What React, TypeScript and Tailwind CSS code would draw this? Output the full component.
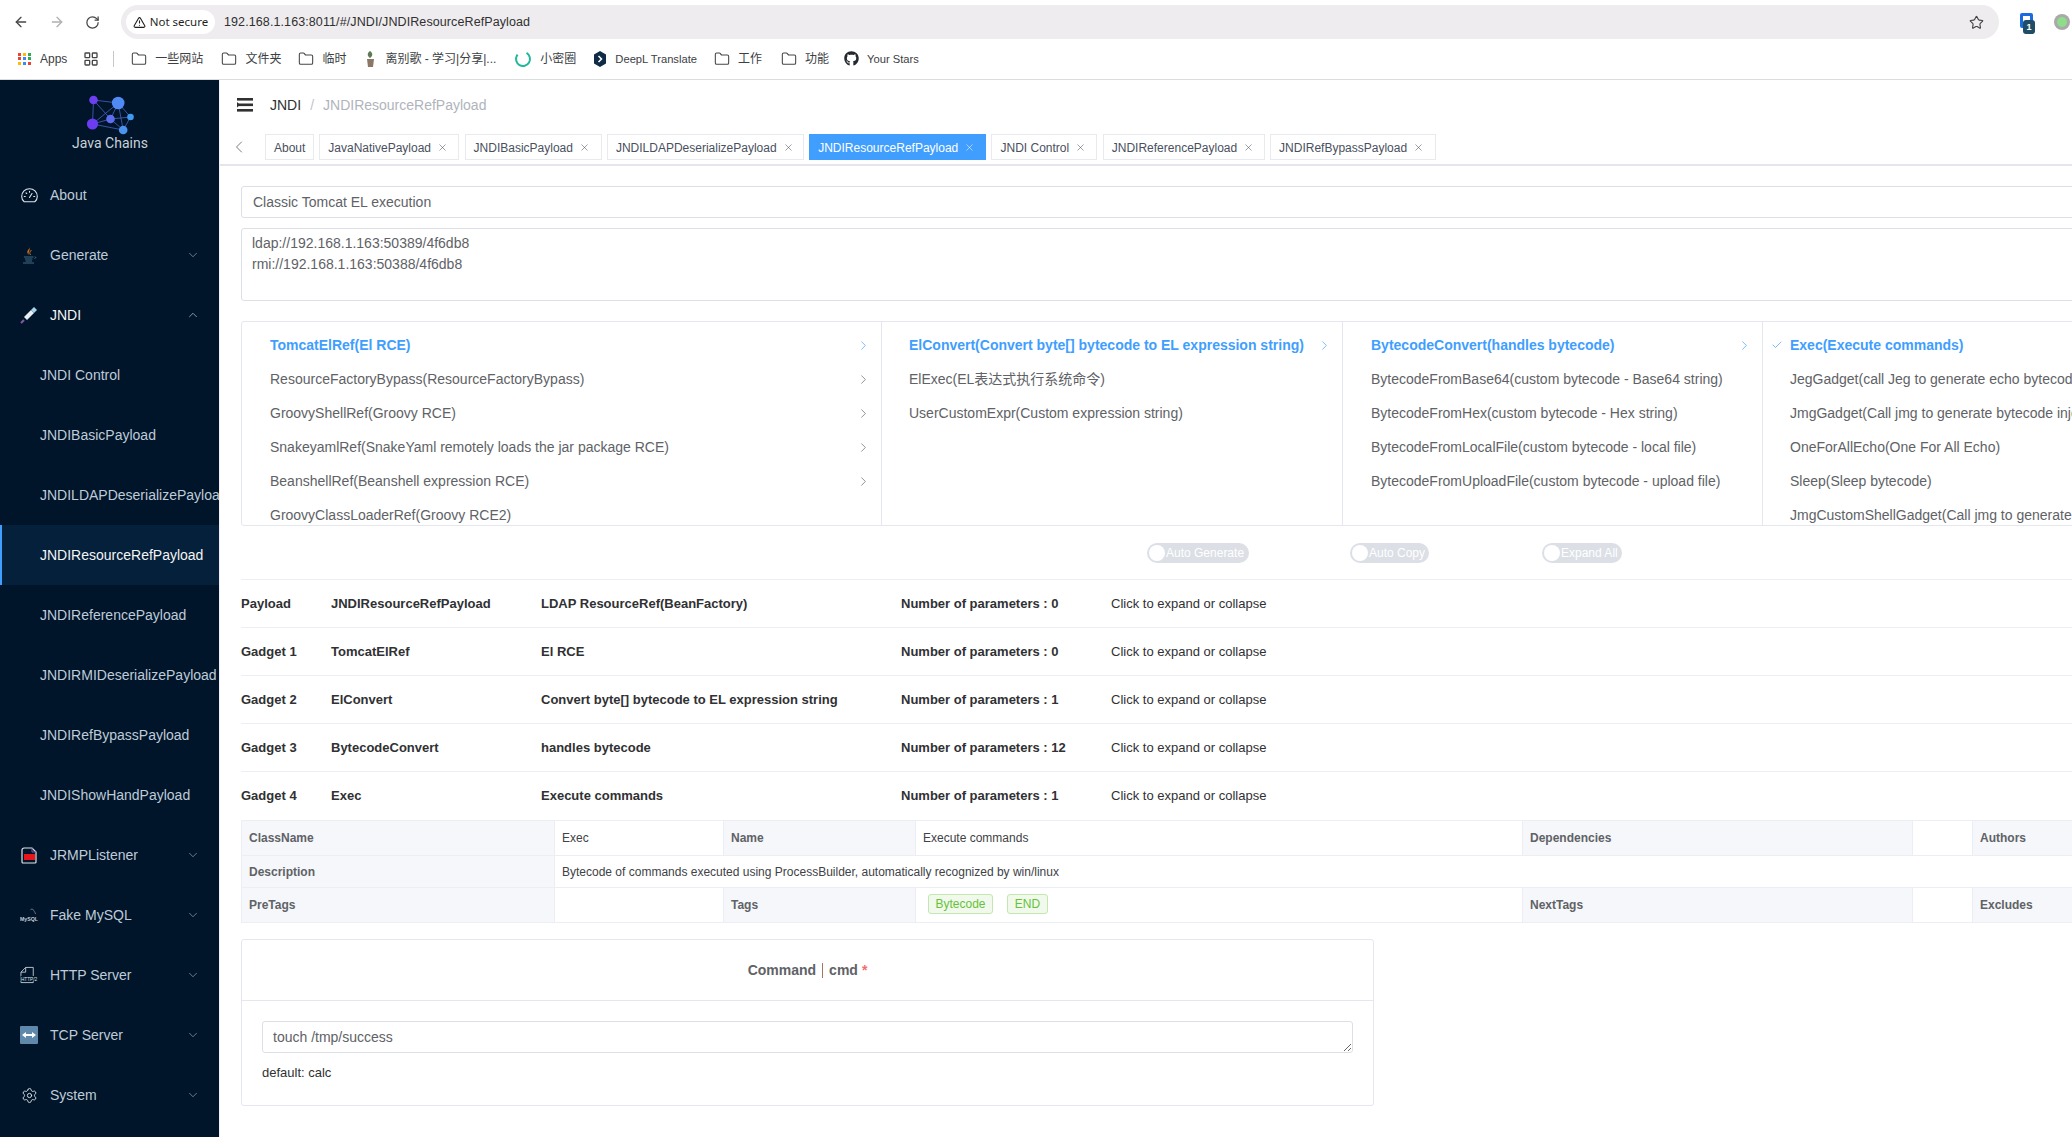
import React from "react";
import { ArrowLeft, ArrowRight, RotateCw, TriangleAlert, Star, Folder, LayoutGrid, Settings, ChevronDown, ChevronUp, ChevronLeft, ChevronRight, X, Check } from "lucide-react";
import { FaGithub } from "react-icons/fa";

const CJK = '"Liberation Sans","Noto Sans CJK SC",sans-serif';

function AppsIcon() {
  const c = ["#ea4335", "#fbbc04", "#34a853", "#ea4335", "#4285f4", "#34a853", "#fbbc04", "#4285f4", "#ea4335"];
  return (
    <div className="grid grid-cols-3 gap-[1.5px] w-[13px] h-[13px]">
      {c.map((x, i) => (
        <div key={i} style={{ background: x }} className="w-[3px] h-[3px]" />
      ))}
    </div>
  );
}

function Bookmark({ icon, text, ml, small }: { icon: React.ReactNode; text: string; ml: string; small?: boolean }) {
  return (
    <div className={`flex items-center gap-[8px] ${ml}`}>
      {icon}
      <span className={`${small ? "text-[11.2px]" : "text-[12px]"} text-[#3c4043] whitespace-nowrap`}>{text}</span>
    </div>
  );
}

const folder = <Folder size={16} strokeWidth={1.6} className="text-[#444746]" />;

function BrowserChrome() {
  return (
    <div className="shrink-0 h-[80px] border-b border-[#dadce0] bg-white font-['Liberation_Sans','Noto_Sans_CJK_SC',sans-serif]">
      <div className="h-[44px] flex items-center relative">
        <div className="flex items-center pl-[13px] gap-[20px] text-[#474747] w-[121px]">
          <ArrowLeft size={16} strokeWidth={2} />
          <ArrowRight size={16} strokeWidth={2} className="text-[#b0b0b0]" />
          <RotateCw size={15} strokeWidth={2} />
        </div>
        <div className="w-[1878px] h-[34px] bg-[#eeecee] rounded-full flex items-center pl-[5px] pr-[15px]">
          <div className="h-[24px] w-[89px] bg-white rounded-full flex items-center justify-center gap-[4px]">
            <TriangleAlert size={13} strokeWidth={2} className="text-[#1f1f1f]" />
            <span className="text-[11.5px] text-[#1f1f1f] whitespace-nowrap font-['Noto_Sans',sans-serif]">Not secure</span>
          </div>
          <span className="ml-[9px] text-[12.5px] text-[#303030] tracking-[0.1px]">192.168.1.163:8011/#/JNDI/JNDIResourceRefPayload</span>
          <Star size={15} strokeWidth={1.8} className="ml-auto text-[#444]" />
        </div>
        <div className="ml-[21px] relative w-[16px] h-[20px]">
          <div className="absolute left-0 top-[1px] w-[13px] h-[15px] rounded-[2px] border-[3px] border-[#1a6be0]" />
          <div className="absolute left-[3px] top-[8px] w-[12px] h-[14px] rounded-[3px] bg-[#1f4d68] text-white text-[9px] font-bold leading-[14px] text-center">1</div>
        </div>
        <div className="ml-[18px] w-[16px] h-[16px] rounded-full bg-[#a9a9a9] flex items-center justify-center shrink-0">
          <div className="w-[10px] h-[10px] rounded-full bg-[#8fdc8a]" />
        </div>
      </div>
      <div className="h-[30px] flex items-center">
        <div className="ml-[18px]"><AppsIcon /></div>
        <span className="ml-[9px] text-[12px] text-[#3c4043]">Apps</span>
        <LayoutGrid size={16} strokeWidth={2} className="ml-[16px] text-[#444746]" />
        <div className="ml-[14px] w-px h-[16px] bg-[#c7c7c7]" />
        <Bookmark ml="ml-[17px]" icon={folder} text="一些网站" />
        <Bookmark ml="ml-[18px]" icon={folder} text="文件夹" />
        <Bookmark ml="ml-[17px]" icon={folder} text="临时" />
        <Bookmark ml="ml-[18px]" icon={
          <svg width="13" height="18" viewBox="0 0 13 18"><path d="M6 1 C3 3 3 6 6 8 C9 6 9 3 6 1Z" fill="#5d7a55" /><path d="M3 9h7l-1 8H4z" fill="#8a7766" /></svg>
        } text="离别歌 - 学习|分享|..." />
        <Bookmark ml="ml-[18px]" icon={
          <svg width="18" height="18" viewBox="0 0 18 18"><circle cx="9" cy="9" r="7" fill="none" stroke="#23b89a" strokeWidth="2" strokeDasharray="34 10" transform="rotate(-60 9 9)" /></svg>
        } text="小密圈" />
        <Bookmark ml="ml-[17px]" small icon={
          <svg width="14" height="16" viewBox="0 0 14 16"><path d="M7 0l6 3.5v9L7 16l-6-3.5v-9z" fill="#0f2b46" /><path d="M5.5 5l3 3-3 3" stroke="#fff" strokeWidth="1.5" fill="none" /></svg>
        } text="DeepL Translate" />
        <Bookmark ml="ml-[17px]" icon={folder} text="工作" />
        <Bookmark ml="ml-[19px]" icon={folder} text="功能" />
        <Bookmark ml="ml-[15px]" small icon={<FaGithub size={15} className="text-[#24292f]" />} text="Your Stars" />
      </div>
    </div>
  );
}

function Logo() {
  const nodes: [number, number, number, string][] = [
    [16.5, 10, 4.3, "#6d3ff0"], [41.2, 13, 6.3, "#4f8af5"], [53.5, 27, 3.3, "#3f9af0"],
    [33.5, 29, 4.3, "#5d6cf0"], [15.5, 34, 5.6, "#6b3cf0"], [46.2, 40, 4.3, "#4a94f0"],
  ];
  const edges = [[0,1],[0,3],[0,4],[1,2],[1,3],[1,5],[2,3],[2,5],[3,4],[3,5],[4,5],[4,1]];
  return (
    <svg width="66" height="46" viewBox="0 0 66 46" className="mx-auto block">
      {edges.map(([a, b], i) => (
        <line key={i} x1={nodes[a][0]} y1={nodes[a][1]} x2={nodes[b][0]} y2={nodes[b][1]} stroke="#4a5fc4" strokeWidth="0.8" />
      ))}
      {nodes.map(([x, y, r, c], i) => <circle key={i} cx={x} cy={y} r={r} fill={c} />)}
    </svg>
  );
}

const icons: Record<string, React.ReactNode> = {
  About: (
    <svg width="17" height="15" viewBox="0 0 17 15" fill="none" stroke="#dfe5ec" strokeWidth="1.1" strokeLinecap="round">
      <path d="M3.2 13.800C1.600 12.500 .7 10.600 .7 8.500a7.800 7.800 0 0115.600 0c0 2.100-.9 4-2.500 5.300z" />
      <path d="M8.500 9.500L11 5.500M3.300 8.500h1M12.700 8.500h1M5 4.800l.7.7M8.500 3.200v1" />
    </svg>
  ),
  Generate: (
    <svg width="16" height="18" viewBox="0 0 16 18">
      <path d="M8.500 0c1 3-3 4-2 7 .3 1 1 1.500 1.500 2C6.500 7 9.500 5 8.500 0z" fill="#c9701f" />
      <path d="M10.500 4c-1.500 1.500-2.500 3-1 5" stroke="#c9701f" strokeWidth="1" fill="none" />
      <path d="M3 11h9.500M14 10.500l1 1-1.500 1M4 13h7.500M4.500 15h6.500M2 17h11" stroke="#3e6c86" strokeWidth="1" fill="none" />
    </svg>
  ),
  JNDI: (
    <svg width="18" height="18" viewBox="0 0 18 18">
      <path d="M1 17l3-3" stroke="#7a5aa0" strokeWidth="2.200" />
      <path d="M4 11l7-7 3 3-7 7z" fill="#e8eef5" />
      <path d="M11 4l3-3 3 3-3 3z" fill="#a7d4ea" />
    </svg>
  ),
  JRMPListener: (
    <svg width="16" height="17" viewBox="0 0 16 17">
      <path d="M1 3a2 2 0 012-2h8l4 4v10a1 1 0 01-1 1H2a1 1 0 01-1-1z" fill="none" stroke="#dfe5ec" strokeWidth="1.200" />
      <rect x="3" y="7" width="11" height="6" fill="#e8141c" />
      <path d="M11 1v4h4" fill="none" stroke="#7a5aa0" strokeWidth="1" />
    </svg>
  ),
  "Fake MySQL": (
    <svg width="19" height="16" viewBox="0 0 19 16">
      <text x="0" y="14" fontSize="5.500" fontWeight="700" fill="#c5ced8" fontFamily="Liberation Sans">MySQL</text>
      <path d="M11 2.500c1-1 2.500-1 3 0s1.500 2 2.500 4.500" stroke="#8695a5" strokeWidth="0.8" fill="none" />
    </svg>
  ),
  "HTTP Server": (
    <svg width="19" height="18" viewBox="0 0 19 18">
      <path d="M1 17V6l5-5h8v16z" fill="none" stroke="#cfd7e0" strokeWidth="0.900" />
      <path d="M1 6h5V1" fill="none" stroke="#cfd7e0" strokeWidth="0.900" />
      <rect x="0.500" y="10" width="18" height="5.500" fill="#001529" />
      <text x="1" y="15" fontSize="5" fill="#dfe5ec" fontFamily="Liberation Sans">HTTP/2</text>
    </svg>
  ),
  "TCP Server": (
    <svg width="18" height="18" viewBox="0 0 18 18">
      <rect width="18" height="18" rx="1" fill="#5f88aa" />
      <path d="M2 9l4-3v2h6V6l4 3-4 3v-2H6v2z" fill="#fff" />
    </svg>
  ),
  System: <Settings size={17} strokeWidth={1.3} className="text-[#dfe5ec]" />,
};

function TopItem({ label, open, chev = true, active }: { label: string; open?: boolean; chev?: boolean; active?: boolean }) {
  return (
    <div className={`h-[60px] flex items-center pl-[20px] pr-[19px] text-[14px] ${active ? "text-[#f4f4f5]" : "text-[#bfcbd9]"}`}>
      <div className="w-[18px] flex justify-center shrink-0">{icons[label]}</div>
      <span className="ml-[12px] whitespace-nowrap">{label}</span>
      {chev && (open
        ? <ChevronUp size={14} strokeWidth={1.3} className="ml-auto text-[#b4bcc8]" />
        : <ChevronDown size={14} strokeWidth={1.3} className="ml-auto text-[#8c99a8]" />)}
    </div>
  );
}

function SubItem({ label, active }: { label: string; active?: boolean }) {
  return (
    <div className={`h-[60px] flex items-center text-[14px] whitespace-nowrap overflow-hidden ${active ? "bg-[#04203a] text-[#f4f4f5] border-l-2 border-[#409eff] pl-[38px]" : "text-[#bfcbd9] pl-[40px]"}`}>
      {label}
    </div>
  );
}

function Sidebar() {
  return (
    <aside className="w-[219px] shrink-0 bg-[#001529] overflow-hidden">
      <div className="h-[85px] pt-[10px] pl-[1px] text-center">
        <Logo />
        <div className="text-[14px] leading-[18px] -mt-[2px] text-[#c9d1d9] font-['Roboto',sans-serif]">Java Chains</div>
      </div>
      <TopItem label="About" chev={false} />
      <TopItem label="Generate" />
      <TopItem label="JNDI" open active />
      <SubItem label="JNDI Control" />
      <SubItem label="JNDIBasicPayload" />
      <SubItem label="JNDILDAPDeserializePayload" />
      <SubItem label="JNDIResourceRefPayload" active />
      <SubItem label="JNDIReferencePayload" />
      <SubItem label="JNDIRMIDeserializePayload" />
      <SubItem label="JNDIRefBypassPayload" />
      <SubItem label="JNDIShowHandPayload" />
      <TopItem label="JRMPListener" />
      <TopItem label="Fake MySQL" />
      <TopItem label="HTTP Server" />
      <TopItem label="TCP Server" />
      <TopItem label="System" />
    </aside>
  );
}

function Tab({ label, w, active, close = true }: { label: string; w: string; active?: boolean; close?: boolean }) {
  return (
    <div className={`h-[26px] ${w} shrink-0 border flex items-center pl-[8px] pt-[1px] text-[12px] whitespace-nowrap ${active ? "bg-[#409eff] border-[#409eff] text-white" : "bg-white border-[#e8eaf0] text-[#495060]"}`}>
      <span>{label}</span>
      {close && <X size={11} strokeWidth={1.2} className="ml-[6px]" />}
    </div>
  );
}

function CasRow({ label, active, chev, check }: { label: string; active?: boolean; chev?: boolean; check?: boolean }) {
  return (
    <div className={`h-[34px] shrink-0 flex items-center pr-[10px] text-[14px] whitespace-nowrap relative ${active ? "text-[#409eff] font-bold" : "text-[#606266]"}`}>
      {check && <Check size={12} strokeWidth={1.4} className="absolute -left-[19px] text-[#409eff]" />}
      <span>{label}</span>
      {chev && <ChevronRight size={15} strokeWidth={1.1} className={`absolute right-[10px] ${active ? "text-[#409eff]" : "text-[#606266]"}`} />}
    </div>
  );
}

function Column({ w, pl, border = true, children }: { w: string; pl: string; border?: boolean; children: React.ReactNode }) {
  return (
    <div className={`${w} ${pl} pt-[6px] shrink-0 flex flex-col overflow-hidden ${border ? "border-r border-[#e4e7ed]" : ""}`}>
      {children}
    </div>
  );
}

function Switch({ label, w, ml }: { label: string; w: string; ml: string }) {
  return (
    <div className={`${w} ${ml} h-[20px] rounded-full bg-[#dcdfe6] flex items-center text-[12px] text-white shrink-0 whitespace-nowrap`}>
      <div className="w-[16px] h-[16px] ml-[2px] mr-[1px] rounded-full bg-white shrink-0" />
      {label}
    </div>
  );
}

function GadgetRow({ a, b, c, d }: { a: string; b: string; c: string; d: string }) {
  return (
    <div className="h-[48px] flex items-center border-t border-[#ebeef5] text-[13px] text-[#303133] whitespace-nowrap">
      <div className="w-[90px] font-bold">{a}</div>
      <div className="w-[210px] font-bold">{b}</div>
      <div className="w-[360px] font-bold">{c}</div>
      <div className="w-[210px] font-bold">{d}</div>
      <div>Click to expand or collapse</div>
    </div>
  );
}

const lab = "border border-[#ebeef5] bg-[#f5f7fa] px-[7px] text-left font-bold text-[#606266] text-[12px]";
const val = "border border-[#ebeef5] px-[7px] text-left font-normal text-[#404246] text-[12px]";

function Details() {
  return (
    <table className="table-fixed border-collapse w-[1831px]">
      <colgroup>
        <col className="w-[313px]" /><col className="w-[169px]" /><col className="w-[192px]" />
        <col className="w-[607px]" /><col className="w-[390px]" /><col className="w-[60px]" /><col className="w-[100px]" />
      </colgroup>
      <tbody>
        <tr className="h-[35px]">
          <th className={lab}>ClassName</th><td className={val}>Exec</td>
          <th className={lab}>Name</th><td className={val}>Execute commands</td>
          <th className={lab}>Dependencies</th><td className={val}></td>
          <th className={lab}>Authors</th>
        </tr>
        <tr className="h-[32px]">
          <th className={lab}>Description</th>
          <td className={val} colSpan={6}>Bytecode of commands executed using ProcessBuilder, automatically recognized by win/linux</td>
        </tr>
        <tr className="h-[35px]">
          <th className={lab}>PreTags</th><td className={val}></td>
          <th className={lab}>Tags</th>
          <td className={val}>
            <div className="flex gap-[14px] ml-[5px] -mt-[3px]">
              <span className="h-[20px] w-[65px] rounded-[3px] border border-[#c2e7b0] bg-[#f0f9eb] text-[#67c23a] text-[12px] leading-[18px] text-center">Bytecode</span>
              <span className="h-[20px] w-[41px] rounded-[3px] border border-[#c2e7b0] bg-[#f0f9eb] text-[#67c23a] text-[12px] leading-[18px] text-center">END</span>
            </div>
          </td>
          <th className={lab}>NextTags</th><td className={val}></td>
          <th className={lab}>Excludes</th>
        </tr>
      </tbody>
    </table>
  );
}

function Main() {
  return (
    <main className="flex-1 min-w-0 overflow-hidden bg-white border-l border-[#eef0f5]">
      <div className="h-[50px] flex items-center pl-[17px] text-[14px]">
        <svg width="16" height="14" viewBox="0 0 16 14" fill="#303133">
          <rect width="16" height="2.600" /><rect y="5.500" width="16" height="2.600" /><rect y="11" width="16" height="2.600" />
          <path d="M0 4l3 2.800-3 2.800z" fill="#303133" />
        </svg>
        <span className="ml-[17px] text-[#303133]">JNDI</span>
        <span className="ml-[9px] text-[#c0c4cc]">/</span>
        <span className="ml-[9px] text-[#b0b4bc]">JNDIResourceRefPayload</span>
      </div>
      <div className="h-[36px] border-b-2 border-[#e4e6ec] pt-[4px] flex items-start gap-[5.300px]">
        <div className="w-[40px] h-[26px] flex items-center pl-[9px] shrink-0 -mr-[0.3px]">
          <ChevronLeft size={20} strokeWidth={1} className="text-[#606266]" />
        </div>
        <Tab label="About" w="w-[49px]" close={false} />
        <Tab label="JavaNativePayload" w="w-[140px]" />
        <Tab label="JNDIBasicPayload" w="w-[137px]" />
        <Tab label="JNDILDAPDeserializePayload" w="w-[197px]" />
        <Tab label="JNDIResourceRefPayload" w="w-[177px]" active />
        <Tab label="JNDI Control" w="w-[106px]" />
        <Tab label="JNDIReferencePayload" w="w-[162px]" />
        <Tab label="JNDIRefBypassPayload" w="w-[166px]" />
      </div>
      <div className="pl-[21px] pt-[20px] w-[1880px]">
        <div className="w-[1860px] h-[32px] border border-[#dcdfe6] rounded-[3px] pl-[11px] flex items-center text-[14px] text-[#606266]">
          Classic Tomcat EL execution
        </div>
        <div className="mt-[10px] w-[1860px] h-[73px] border border-[#dcdfe6] rounded-[3px] pl-[10px] pt-[4px] text-[14px] leading-[21px] text-[#606266]">
          <div>ldap://192.168.1.163:50389/4f6db8</div>
          <div>rmi://192.168.1.163:50388/4f6db8</div>
        </div>
        <div className="mt-[20px] w-[1860px] h-[205px] border border-[#e4e7ed] rounded-[3px] flex overflow-hidden" style={{ fontFamily: CJK }}>
          <Column w="w-[640px]" pl="pl-[28px] relative">
            <CasRow label="TomcatElRef(El RCE)" active chev />
            <CasRow label="ResourceFactoryBypass(ResourceFactoryBypass)" chev />
            <CasRow label="GroovyShellRef(Groovy RCE)" chev />
            <CasRow label="SnakeyamlRef(SnakeYaml remotely loads the jar package RCE)" chev />
            <CasRow label="BeanshellRef(Beanshell expression RCE)" chev />
            <CasRow label="GroovyClassLoaderRef(Groovy RCE2)" />
          </Column>
          <Column w="w-[461px]" pl="pl-[27px]">
            <CasRow label="ElConvert(Convert byte[] bytecode to EL expression string)" active chev />
            <CasRow label="ElExec(EL表达式执行系统命令)" />
            <CasRow label="UserCustomExpr(Custom expression string)" />
          </Column>
          <Column w="w-[420px]" pl="pl-[28px]">
            <CasRow label="BytecodeConvert(handles bytecode)" active chev />
            <CasRow label="BytecodeFromBase64(custom bytecode - Base64 string)" />
            <CasRow label="BytecodeFromHex(custom bytecode - Hex string)" />
            <CasRow label="BytecodeFromLocalFile(custom bytecode - local file)" />
            <CasRow label="BytecodeFromUploadFile(custom bytecode - upload file)" />
          </Column>
          <Column w="w-[330px]" pl="pl-[27px]" border={false}>
            <CasRow label="Exec(Execute commands)" active check />
            <CasRow label="JegGadget(call Jeg to generate echo bytecode)" />
            <CasRow label="JmgGadget(Call jmg to generate bytecode injection)" />
            <CasRow label="OneForAllEcho(One For All Echo)" />
            <CasRow label="Sleep(Sleep bytecode)" />
            <CasRow label="JmgCustomShellGadget(Call jmg to generate custom shell)" />
          </Column>
        </div>
        <div className="mt-[17px] h-[20px] flex">
          <Switch label="Auto Generate" w="w-[102px]" ml="ml-[906px]" />
          <Switch label="Auto Copy" w="w-[79px]" ml="ml-[101px]" />
          <Switch label="Expand All" w="w-[80px]" ml="ml-[113px]" />
        </div>
        <div className="mt-[16px] mb-[1px] w-[1860px]">
          <GadgetRow a="Payload" b="JNDIResourceRefPayload" c="LDAP ResourceRef(BeanFactory)" d="Number of parameters : 0" />
          <GadgetRow a="Gadget 1" b="TomcatElRef" c="El RCE" d="Number of parameters : 0" />
          <GadgetRow a="Gadget 2" b="ElConvert" c="Convert byte[] bytecode to EL expression string" d="Number of parameters : 1" />
          <GadgetRow a="Gadget 3" b="BytecodeConvert" c="handles bytecode" d="Number of parameters : 12" />
          <GadgetRow a="Gadget 4" b="Exec" c="Execute commands" d="Number of parameters : 1" />
        </div>
        <Details />
        <div className="mt-[16px] w-[1133px] h-[167px] border border-[#e4e7ed] rounded-[3px]">
          <div className="h-[61px] border-b border-[#e4e7ed] flex items-center justify-center text-[14px] font-bold text-[#606266] pt-[1px]">
            <span>Command</span>
            <span className="mx-[6px] w-px h-[15px] bg-[#a9745c]" />
            <span>cmd</span>
            <span className="ml-[4px] text-[#f56c6c]">*</span>
          </div>
          <div className="px-[20px] pt-[20px]">
            <textarea
              readOnly
              rows={1}
              defaultValue="touch /tmp/success"
              className="block w-full h-[32px] resize-y border border-[#dcdfe6] rounded-[3px] pl-[10px] py-[5px] text-[14px] leading-[21px] text-[#606266] outline-none overflow-hidden"
            />
            <div className="mt-[10px] text-[13px] text-[#303133]">default: calc</div>
          </div>
        </div>
      </div>
    </main>
  );
}

export default function App() {
  return (
    <div className="w-[2072px] h-[1137px] overflow-hidden flex flex-col bg-white font-['Liberation_Sans','Noto_Sans_CJK_SC',sans-serif]">
      <BrowserChrome />
      <div className="flex flex-1 min-h-0">
        <Sidebar />
        <Main />
      </div>
    </div>
  );
}
